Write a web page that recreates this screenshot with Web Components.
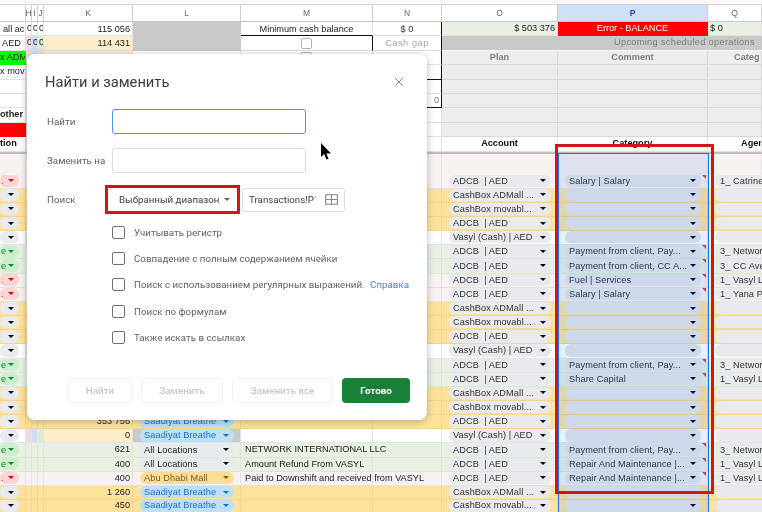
<!DOCTYPE html>
<html><head><meta charset="utf-8"><title>Find and replace</title>
<style>
html,body{margin:0;height:100%;overflow:hidden;background:#fff}
body{font-family:"Liberation Sans",Arial,sans-serif}
</style></head><body>
<x-app>
  <x-sheet></x-sheet>
  <x-dialog></x-dialog>
</x-app>
<script>
class XApp extends HTMLElement{constructor(){super();const s=this.attachShadow({mode:'open'});
s.innerHTML=`<style>:host{display:block;position:relative;width:762px;height:512px;overflow:hidden;filter:blur(.4px)}
.wrap{position:relative;width:762px;height:512px}
svg{position:absolute;left:320px;top:143px;z-index:3}</style>
<div class="wrap"><slot></slot>
<svg width="12" height="18" viewBox="0 0 12 18"><path d="M1 0v14l3.2-3 2.2 5.6 2.2-.9-2.3-5.3H11z" fill="#000"/></svg></div>`;}}
customElements.define('x-app',XApp);

class XPill extends HTMLElement{constructor(){super();const s=this.attachShadow({mode:'open'});
s.innerHTML=`<style>:host{display:flex;align-items:center;height:12.5px;border-radius:6px;background:var(--pill,#e8eaed);color:var(--ink,#333);box-sizing:border-box;padding:0 5px 0 4px;min-width:0;flex:1;font-size:9.2px;letter-spacing:.1px}
.t{flex:1;white-space:nowrap;overflow:hidden;line-height:12px}
.a{display:var(--a,block);width:0;height:0;border:3.4px solid transparent;border-top:3.8px solid var(--arrow,#000);border-bottom:0;flex:none;margin-left:2px}</style>
<span class="t"><slot></slot></span><span class="a"></span>`;}}
customElements.define('x-pill',XPill);

const W=[26,6,6,6,89,108,132,69,116,150,54];
const CSS=`:host{display:block;width:762px;height:512px;background:#fff;overflow:hidden;position:relative;z-index:0;font-size:9.2px;color:#222}
.top{height:4px;background:#f8f8f8;border-bottom:1px solid #d4d4d4}
.r{display:flex;box-sizing:border-box;overflow:hidden}
.c{box-sizing:border-box;flex:none;overflow:hidden;white-space:nowrap;display:flex;align-items:center;border-right:1px solid #e2e2e2;border-bottom:1px solid #e2e2e2;padding:0 2px;line-height:1}
.hd .c{color:#666;font-size:8.5px;justify-content:center;border-right:1px solid #d0d0d0;border-bottom:1px solid #c8c8c8;padding-top:1px}
.thick{height:2px;background:#bdbdbd}
.sel{position:absolute;left:558px;top:153px;width:151px;height:360px;box-sizing:border-box;background:rgba(14,101,235,.1);border:1px solid #1a73e8;border-bottom:0;pointer-events:none;z-index:2}
.red{position:absolute;left:555px;top:144px;width:159px;height:350px;box-sizing:border-box;border:3px solid #d31515;pointer-events:none;z-index:2}
.tri{position:absolute;right:1px;top:0;width:0;height:0;border-top:4px solid #d9453e;border-left:4px solid transparent}
.pc{position:relative;padding:0 6px 1px 7px;display:flex;align-items:center}
.box{width:11px;height:11px;border:1.5px solid #b4b4b4;border-radius:2px;box-sizing:border-box;background:#fff}
.over{position:relative;z-index:1;overflow:visible}
`;
const Y='#fee29c',G='#e7f0e2',K='#f7f1f0',WH='#ffffff',GR='#c9c9c9',LG='#ededed';
function c(i,t,st,cl){return `<div class="c ${cl||''}" style="width:${W[i]}px;${st||''}">${t||''}</div>`}
function topRow(h,cells){return `<div class="r" style="height:${h}px">${cells.join('')}</div>`}
function grey(i,t,st){return c(i,t?`<span>${t}</span>`:'',`background:${LG};justify-content:center;color:#808080;font-weight:700;border-color:#d8d8d8;${st||''}`)}
function plain(i,st){return c(i,'',st)}
const blk='border-right:1px solid #111;';
const low='padding-top:2px;';
function tops(){
 const H=()=>c(1,'0','padding:0 0 0 1px')+c(2,'0','padding:0 0 0 1px')+c(3,'0','padding:0 0 0 1px');
 const tint=()=>c(1,'','background:#f0dbe3')+c(2,'','background:#cfdcf5')+c(3,'','background:#dcebd6');
 const qh='justify-content:flex-start;padding-left:26px;';
 let o='';
 o+=topRow(14.4,[c(0,'all acc','padding:2px 0 0 3px'),H(),c(4,'115 056',low+'justify-content:flex-end;background:#fff'),plain(5,`background:${GR};border-color:${GR}`),
   c(6,'Minimum cash balance',low+'justify-content:center;border-bottom:1px solid #111'),c(7,'$ 0',low+'justify-content:center;color:#333;'+blk),
   c(8,'$ 503 376',`justify-content:flex-end;background:${G}`),c(9,'Error - BALANCE','justify-content:center;background:#f00;color:#fff;border-color:#f00'),c(10,'$ 0',`background:${G}`)]);
 o+=topRow(14.4,[c(0,'AED',low),c(1,'0','background:#f0dbe3;padding:0 0 0 1px')+c(2,'0','background:#cfdcf5;padding:0 0 0 1px')+c(3,'0','background:#dcebd6;padding:0 0 0 1px'),
   c(4,'114 431',low+'justify-content:flex-end;background:#fdeec9'),plain(5,`background:${GR};border-color:${GR}`),
   c(6,'<span class="box"></span>','justify-content:center;'+blk),c(7,'Cash gap',low+'justify-content:center;color:#a6a6a6;letter-spacing:.55px;'+blk),
   `<div class="c" style="width:320px;background:${GR};color:#7d7d7d;border:0;border-bottom:1px solid #fff;padding-left:172px;letter-spacing:.33px">Upcoming scheduled operations</div>`]);
 o+=topRow(14.4,[c(0,'x ADM','background:#0f0;padding:0;border-color:#0f0'),tint(),c(4,'','background:#fdeec9'),plain(5),c(6,'<span class="box"></span>','justify-content:center;'),c(7,'',blk),grey(8,'Plan'),grey(9,'Comment'),grey(10,'Categ',qh)]);
 o+=topRow(14.4,[c(0,'x mova','padding:0'),tint(),plain(4),plain(5),plain(6),c(7,'',blk+'border-bottom:1px solid #111'),grey(8),grey(9),grey(10)]);
 o+=topRow(14.4,[c(0),tint(),plain(4),plain(5),plain(6),c(7,'',blk),grey(8),grey(9),grey(10)]);
 o+=topRow(14.4,[c(0),tint(),plain(4),plain(5),plain(6),c(7,'0',blk+'border-bottom:1px solid #111;justify-content:flex-end;color:#777'),grey(8),grey(9),grey(10)]);
 o+=topRow(14.4,[c(0,'other','font-weight:700;padding:0'),tint(),plain(4),plain(5),plain(6),plain(7),grey(8),grey(9),grey(10)]);
 o+=topRow(14.4,[c(0,'','background:#f00;border-color:#f00'),tint(),plain(4),plain(5),plain(6),plain(7),grey(8),grey(9),grey(10)]);
 const bh=(i,t,st)=>c(i,t,'justify-content:center;font-weight:700;color:#111;'+(st||''));
 o+=topRow(14.4,[c(0,'tion','font-weight:700;padding:0;color:#111'),tint(),plain(4),plain(5),plain(6),plain(7),bh(8,'Account'),bh(9,'Category'),bh(10,'Agen',qh.replace('26','33'))]);
 return o;
}
const AC={a:'ADCB &nbsp;| AED',m:'CashBox ADMall ...',v:'CashBox movabl...',c:'Vasyl (Cash) | AED'};
const rows=[
 ['k','a','Salary | Salary','1_ Catrine'],['y','m'],['y','v'],['y','a'],['w','c'],
 ['g','a','Payment from client, Pay...','3_ Networ'],['g','a','Payment from client, CC A...','3_ CC Ave'],
 ['k','a','Fuel | Services','1_ Vasyl L'],['k','a','Salary | Salary','1_ Yana P'],
 ['y','m'],['y','v'],['y','a'],['w','c'],
 ['g','a','Payment from client, Pay...','3_ Networ'],['g','a','Share Capital','1_ Vasyl L'],
 ['y','m'],['y','v'],['y','a','','', '353 756','sb'],['w','c','','','0','sb',''],
 ['g','a','Payment from client, Pay...','3_ Networ','621','al','NETWORK INTERNATIONAL LLC'],
 ['g','a','Repair And Maintenance |...','1_ Vasyl L','400','al','Amount Refund From VASYL'],
 ['k','a','Repair And Maintenance |...','1_ Vasyl L','400','ab','Paid to Downshift and received from VASYL'],
 ['y','m','','','1 260','sb'],['y','v','','','450','sb']];
const BG={k:K,y:Y,g:G,w:WH},LN={k:'#e8e0e0',y:'#f1d68f',g:'#dbe6d5',w:'#e4e4e4'};
const LP={k:['#fbd5d3','#d00','#e03030'],g:['#cdeecb','#0a8a3a','#0a8a3a'],y:['#e8eaed','#000','#333'],w:['#e8eaed','#000','#333']};
function row(d,i){
 const [t,acc,cat,ag,k,l,m]=d;const bg=BG[t],ln=LN[t];
 let h=14.16; if(i===23)h=12.5;
 const cell=(j,inner,st,cl)=>`<div class="c ${cl||''}" style="width:${W[j]}px;background:${bg};border-color:${ln};${st||''}">${inner||''}</div>`;
 const lp=LP[t];
 const tag=t==='k'?'.':t==='g'?'e':'';
 let lh=`<div class="c" style="width:26px;background:${bg};border-color:${ln};padding:0 6px 1px 0"><x-pill style="--pill:${lp[0]};--ink:${lp[2]};--arrow:${lp[1]};padding:0 5px 0 1px">${tag}</x-pill></div>`;
 const tints=t==='w'?cell(1,'','background:#f0dbe3')+cell(2,'','background:#cfdcf5')+cell(3,'','background:#dcebd6'):cell(1)+cell(2)+cell(3);
 let lc='';
 const lcell=(b,style,txt)=>`<div class="c pc" style="width:108px;background:${b};border-color:${ln}"><x-pill style="${style};padding:0 5px 0 4px">${txt}</x-pill></div>`;
 if(l==='sb')lc=lcell(t==='w'?GR:bg,'--pill:#bde0f7;--ink:#1f6fc4;--arrow:#1f6fc4','Saadiyat Breathe');
 else if(l==='al')lc=lcell(bg,'--pill:#e8eaed;--ink:#222;--arrow:#000','All Locations');
 else if(l==='ab')lc=lcell(bg,'--pill:#fedd95;--ink:#7a5a1c;--arrow:#7a5a1c','Abu Dhabi Mall');
 else lc=cell(5);
 const cat1=`<div class="c pc" style="width:150px;background:${bg};border-color:${ln}"><x-pill style="--pill:#e4e6ea;--ink:#333">${cat||''}</x-pill>${cat?'<span class="tri"></span>':''}</div>`;
 return `<div class="r" style="height:${h}px">${lh}${tints}${cell(4,k||'','justify-content:flex-end;'+(t==='w'?'background:#fdeec9;':''))}${lc}${cell(6,m||'','padding-left:4px;','over')}${cell(7)}
 <div class="c pc" style="width:116px;background:${bg};border-color:${ln}"><x-pill>${AC[acc]}</x-pill></div>${cat1}
 <div class="c" style="width:54px;background:${bg};border:0;border-bottom:1px solid ${ln};padding:0 0 1px 7px"><x-pill style="--pill:#e8eaed;--a:none;border-radius:6px 0 0 6px;padding:0 0 0 5px">${ag||''}</x-pill></div></div>`;
}
class XSheet extends HTMLElement{constructor(){super();const s=this.attachShadow({mode:'open'});
 const letters=['','H','I','J','K','L','M','N','O','P','Q'];
 const hd=`<div class="r hd" style="height:17px">${letters.map((l,i)=>`<div class="c" style="width:${W[i]}px;${l==='P'?'background:#cfe0f8;color:#174ea6;font-weight:700':''}">${l}</div>`).join('')}</div>`;
 const pink=`<div class="r" style="height:21px;background:${K}">${W.map((w,i)=>`<div class="c" style="width:${w}px;background:${K};border-color:#e9e2e2;border-bottom:0"></div>`).join('')}</div>`;
 s.innerHTML=`<style>${CSS}</style><div class="top"></div>${hd}${tops()}<div class="thick"></div>${pink}${rows.map(row).join('')}<div class="sel"></div><div class="red"></div>`;
}}
customElements.define('x-sheet',XSheet);

class XOption extends HTMLElement{constructor(){super();const s=this.attachShadow({mode:'open'});
 s.innerHTML=`<style>:host{display:flex;align-items:center;height:13px;color:#5f6368;font-size:9.75px;white-space:nowrap;gap:9px;margin-left:67px}
 i{width:13px;height:13px;box-sizing:border-box;border:1.3px solid #6f7377;border-radius:2px;flex:none}</style><i></i><span><slot></slot></span>`;}}
customElements.define('x-option',XOption);

class XDialog extends HTMLElement{constructor(){super();const s=this.attachShadow({mode:'open'});
 s.innerHTML=`<style>
 :host{position:absolute;z-index:2;left:27px;top:54px;width:400px;height:366px;background:#fff;border-radius:8px;box-shadow:0 1px 6px rgba(60,64,67,.25),0 2px 10px rgba(60,64,67,.12);font-family:Roboto,"Noto Sans",sans-serif;color:#5f6368;display:flex;flex-direction:column;box-sizing:border-box;padding:0 17px 0 18px}
 .head{display:flex;align-items:center;justify-content:space-between;height:55px;flex:none;padding-right:7px}
 h1{font-size:14.7px;font-weight:400;color:#3c4043;margin:0}
 .f{display:flex;align-items:center;font-size:9.8px}
 .f label{width:65px;padding-left:2px;flex:none;white-space:nowrap}
 .inp{width:194px;height:25px;box-sizing:border-box;border:1px solid #dadce0;border-radius:3px}
 .inp.on{border-color:#4d90fe}
 .dd{width:135px;height:29px;box-sizing:border-box;border:3px solid #d31515;margin-left:-7px;display:flex;align-items:center;font-size:9.75px;color:#3c4043;padding-left:11px;gap:5px;white-space:nowrap}
 .dd b{width:0;height:0;border:3px solid transparent;border-top:3.5px solid #5f6368;border-bottom:0}
 .rng{width:103px;height:24px;box-sizing:border-box;margin-left:2px;border:1px solid #dadce0;border-radius:3px;display:flex;align-items:center;justify-content:space-between;padding:0 6px;font-size:9.75px;color:#3c4043}
 .rng span{width:67px;overflow:hidden;white-space:nowrap}
 .opts{display:flex;flex-direction:column;gap:13.2px;margin-top:12px}
 a{color:#4285f4;margin-left:3px}
 .btns{display:flex;align-items:stretch;height:25px;margin-top:auto;margin-bottom:17px;margin-left:23px;gap:9px}
 .btns div{box-sizing:border-box;border:1px solid #f1f1f2;border-radius:4px;color:#c6c8ca;font-size:9.8px;font-weight:500;display:flex;align-items:center;justify-content:center}
 .btns .go{background:#188038;border:0;color:#fff;font-weight:700}
 </style>
 <div class="head"><h1>Найти и заменить</h1>
 <svg width="8" height="8" viewBox="0 0 8 8"><path d="M.4.4l7.2 7.2M7.6.4L.4 7.6" stroke="#80868b" stroke-width="1" fill="none"/></svg></div>
 <div class="f"><label>Найти</label><div class="inp on"></div></div>
 <div class="f" style="margin-top:14px"><label>Заменить на</label><div class="inp"></div></div>
 <div class="f" style="margin-top:12px"><label>Поиск</label><div class="dd">Выбранный диапазон<b></b></div>
 <div class="rng"><span>Transactions!P1</span><svg width="13" height="11" viewBox="0 0 13 11"><path d="M.7.7h11.6v9.6H.7zM6.5.7v9.6M.7 5.5h11.6" stroke="#80868b" fill="none" stroke-width="1.1"/></svg></div></div>
 <div class="opts">
 <x-option>Учитывать регистр</x-option>
 <x-option>Совпадение с полным содержанием ячейки</x-option>
 <x-option>Поиск с использованием регулярных выражений. <a>Справка</a></x-option>
 <x-option>Поиск по формулам</x-option>
 <x-option>Также искать в ссылках</x-option></div>
 <div class="btns"><div style="width:64px">Найти</div><div style="width:82px">Заменить</div><div style="width:101px">Заменить все</div><div class="go" style="width:68px">Готово</div></div>`;
}}
customElements.define('x-dialog',XDialog);
</script>
</body></html>
